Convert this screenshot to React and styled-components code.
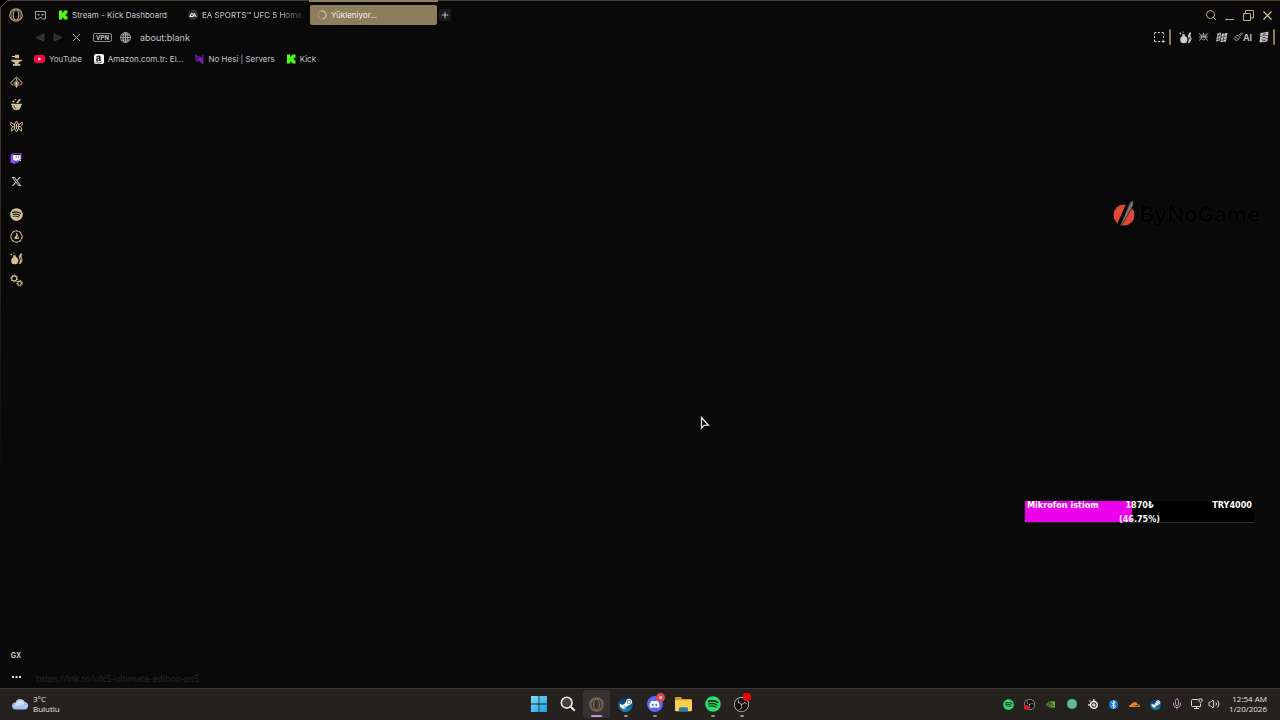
import React from "react";
import styled, { createGlobalStyle } from "styled-components";
import {
  FaSpotify,
  FaTwitch,
  FaXTwitter,
  FaDiscord,
  FaAmazon,
  FaBluetoothB,
  FaSteamSymbol,
} from "react-icons/fa6";
import { SiNvidia, SiCloudflare, SiObsstudio, SiSteelseries } from "react-icons/si";
import { X, Search, Plus, Mic, Volume2 } from "lucide-react";

const GlobalStyle = createGlobalStyle`
  * { box-sizing: border-box; }
  body {
    margin: 0;
    background: #090909;
    color: #c4c4c4;
    font-family: Inter, "Liberation Sans", sans-serif;
    font-size: 8px;
    overflow: hidden;
  }
  button, input { font: inherit; color: inherit; }
  svg { display: block; flex: none; }
`;

const Desktop = styled.div`
  display: flex;
  flex-direction: column;
  min-height: 100vh;
`;

const Browser = styled.div`
  position: relative;
  flex: 1;
  display: flex;
  flex-direction: column;
  padding-top: 3px;
  border-top: 1px solid #453e31;

  &::before {
    content: "";
    position: absolute;
    top: 8px;
    left: 0;
    width: 1px;
    height: 70%;
    background: linear-gradient(#544a38, #2a251c 50%, transparent);
  }
`;

const Corner = styled.svg`
  position: absolute;
  top: -1px;
  left: 0;
`;

const IconButton = styled.button`
  position: relative;
  display: flex;
  align-items: center;
  justify-content: center;
  width: ${(props) => props.$w || 20}px;
  height: ${(props) => props.$h || 22}px;
  padding: 0;
  border: 0;
  background: none;
  color: ${(props) => props.$color || "#b8b8b8"};
`;

const TabStrip = styled.div`
  display: flex;
  align-items: center;
  height: 22px;
  padding-left: 6px;
  padding-right: 3px;
`;

const IslandButton = styled(IconButton)`
  margin: 0 7px 0 9px;
`;

const Tabs = styled.div`
  display: flex;
  gap: 2px;
`;

const Tab = styled.button`
  position: relative;
  display: flex;
  align-items: center;
  gap: 4px;
  width: 127px;
  height: 20px;
  padding: 0 7px;
  border: 0;
  border-radius: 2px;
  background: ${(props) => (props.$active ? "#8c7d5c" : "none")};
  color: ${(props) => (props.$active ? "#f6f0e2" : "#c6c6c6")};
  text-align: left;
`;

const TabTitle = styled.span`
  flex: 1;
  white-space: nowrap;
  ${(props) => props.$fade && "mask-image: linear-gradient(90deg, #000 78%, #0003);"}
`;

const TabEdge = styled.i`
  position: absolute;
  top: -5px;
  left: -1px;
  right: -1px;
  height: 2px;
  background: #8c7d5c;
`;

const NewTab = styled(IconButton)`
  margin-left: 2px;
  border-radius: 2px;
  background: #1c1b1c;
`;

const WindowButtons = styled.div`
  display: flex;
  margin-left: auto;
`;

const AddressRow = styled.div`
  display: flex;
  align-items: center;
  height: 22px;
  padding-left: 31px;
`;

const Vpn = styled.button`
  height: 9px;
  width: 19px;
  margin: 0 8px;
  padding: 0;
  border: 1px solid #8d8d8d;
  border-radius: 2px;
  background: none;
  color: #c6c6c6;
  font-size: 6px;
  line-height: 7px;
  font-weight: 700;
`;

const AddressInput = styled.input`
  flex: 1;
  min-width: 0;
  margin-left: 9px;
  padding: 0;
  border: 0;
  outline: 0;
  background: none;
  color: #c6c6c6;
  font-size: 9px;
`;

const Divider = styled.i`
  width: 2px;
  height: 16px;
  margin-right: 5px;
  border-radius: 1px;
  background: #8c7d5c;
`;

const Ai = styled.b`
  font-size: 9px;
`;

const Body = styled.div`
  flex: 1;
  display: flex;
`;

const Sidebar = styled.nav`
  display: flex;
  flex-direction: column;
  gap: 11px;
  width: 32px;
  padding-top: 1px;
`;

const SideGroup = styled.div`
  margin-top: ${(props) => (props.$last ? "auto" : 0)};
`;

const SideButton = styled(IconButton)`
  width: 32px;
  font-size: 7px;
  font-weight: 700;
`;

const Main = styled.main`
  flex: 1;
  min-width: 0;
  display: flex;
  flex-direction: column;
`;

const Bookmarks = styled.div`
  display: flex;
  align-items: center;
  gap: 12px;
  height: 22px;
  padding-left: 2px;
`;

const Bookmark = styled.a`
  display: flex;
  align-items: center;
  gap: 4px;
  color: #c6c6c6;
  text-decoration: none;
`;

const Favicon = styled.span`
  display: flex;
  align-items: center;
  justify-content: center;
  width: 10px;
  height: 10px;
  border-radius: 2px;
  background: ${(props) => props.$bg || "none"};
  color: #111;
`;

const Page = styled.div`
  flex: 1;
  display: flex;
  align-items: flex-end;
`;

const StatusUrl = styled.span`
  padding: 0 4px 3px;
  color: #292929;
  font: 9px/12px "Open Sans", sans-serif;
`;

const Sponsor = styled.div`
  position: absolute;
  top: 197px;
  right: 20px;
  display: flex;
  align-items: center;
  gap: 3px;
  color: #000;
  font: 700 22px/32px Inter, sans-serif;
  text-shadow: 0 0 1px #2c2c2c;
`;

const Goal = styled.div`
  position: absolute;
  right: 26px;
  bottom: 165px;
  display: grid;
  grid-template-columns: 1fr 48px 1fr;
  width: 229px;
  height: 22px;
  padding: 0 2px;
  border-bottom: 1px solid #2b2b2b;
  background: linear-gradient(90deg, #ec00ec 46.75%, #000 46.75%);
  color: #fff;
  font: 700 9px/14px "DejaVu Sans Condensed", "Noto Sans", sans-serif;
  text-align: center;
`;

const GoalText = styled.span`
  margin-top: -3px;
  white-space: nowrap;
  text-align: ${(props) => props.$align || "center"};
`;

const Cursor = styled.svg`
  position: absolute;
  top: 415px;
  left: 700px;
`;

const Taskbar = styled.footer`
  display: grid;
  grid-template-columns: 1fr auto 1fr;
  align-items: center;
  height: 32px;
  padding-bottom: 1px;
  border-top: 1px solid #3b3935;
  background: #24211e;
  color: #e4e4e4;
  font: 8px/10px "Open Sans", "Noto Sans", sans-serif;
`;

const Weather = styled.button`
  display: flex;
  align-items: center;
  gap: 4px;
  padding: 0 0 0 12px;
  border: 0;
  background: none;
  text-align: left;
`;

const Apps = styled.div`
  display: flex;
  gap: 2px;
`;

const AppButton = styled.button`
  position: relative;
  display: flex;
  align-items: center;
  justify-content: center;
  width: 27px;
  height: 28px;
  padding: 0;
  border: 0;
  border-radius: 3px;
  background: ${(props) => (props.$active ? "#35322f" : "none")};

  &::after {
    content: "";
    position: absolute;
    bottom: 1px;
    width: ${(props) => (props.$active ? 11 : 4)}px;
    height: 2px;
    border-radius: 1px;
    background: ${(props) => (props.$active ? "#cf8fdb" : "#929090")};
    opacity: ${(props) => (props.$active || props.$running ? 1 : 0)};
  }
`;

const Badge = styled.i`
  position: absolute;
  top: 3px;
  right: ${(props) => (props.$ring ? 3 : 4)}px;
  width: ${(props) => (props.$ring ? 9 : 8)}px;
  height: ${(props) => (props.$ring ? 9 : 8)}px;
  border: ${(props) => (props.$ring ? "3px solid #d9494d" : 0)};
  border-radius: ${(props) => (props.$ring ? "50%" : "3px")};
  background: ${(props) => (props.$ring ? "#f3d5d5" : "#e8000b")};
`;

const RecDot = styled.i`
  position: absolute;
  left: 5px;
  bottom: 5px;
  width: 5px;
  height: 5px;
  border-radius: 50%;
  background: #e0102a;
`;

const Tray = styled.div`
  display: flex;
  align-items: center;
  justify-content: flex-end;
  padding-right: 13px;
`;

const Disc = styled.span`
  display: flex;
  align-items: center;
  justify-content: center;
  width: ${(props) => props.$size}px;
  height: ${(props) => props.$size}px;
  border-radius: ${(props) => props.$radius || "50%"};
  background: ${(props) => props.$bg};
  color: ${(props) => props.$color || "#fff"};
`;

const Clock = styled.time`
  margin-left: 8px;
  text-align: right;
  white-space: nowrap;
`;

const OperaIcon = ({ size = 14, color = "#b5a27b" }) => (
  <svg width={size} height={size} viewBox="0 0 14 14" fill="none" stroke={color}>
    <circle cx="7" cy="7" r="6.2" strokeWidth="1.2" />
    <ellipse cx="7" cy="7" rx="2.7" ry="5" strokeWidth="1.2" />
    <path d="M4.3 2.2C1.6 4.7 1.6 9.3 4.3 11.8M9.7 2.2c2.7 2.5 2.7 7.1 0 9.6" strokeWidth=".7" />
  </svg>
);

const KickIcon = () => (
  <svg width="9" height="10" viewBox="0 0 9 10" fill="#53fc18">
    <path d="M0 .5h3.2v2.200h1V1.500h1V.5h3.300v3H7.400v1H6.400v1h1v1h1.100v3H5.200v-1h-1v-1h-1v2H0z" />
  </svg>
);

const EaIcon = () => (
  <svg width="10" height="10" viewBox="0 0 20 20">
    <circle cx="10" cy="10" r="10" fill="#303030" />
    <path d="M6 6h6l-1 1.7H5zM4.2 9h6.2l-1 1.7H6.2l-.7 1.2h3.6L13 6l4.500 7.800h-2.200l-.8-1.500h-3l-.9 1.500H2.300l1.900-3.100H3.100zM13 9.100l-1 1.700h2z" fill="#f2f2f2" />
  </svg>
);

const YoutubeIcon = () => (
  <svg width="11" height="8" viewBox="0 0 11 8">
    <rect width="11" height="8" rx="2" fill="#f4033d" />
    <path d="M4.3 2.2v3.6L7.4 4z" fill="#fff" />
  </svg>
);

const NoHesiIcon = () => (
  <svg width="9" height="10" viewBox="0 0 9 10" fill="none" stroke="#8a20d6" strokeWidth="1.1">
    <path d="M1 7.2V1.400l5.200 5.800V3.300M2.800 5v2.800M4 2.200l3.800 4V9.500L3.400 5M7.800 1.300v4" />
  </svg>
);

const MaskIcon = () => (
  <svg width="11" height="9" viewBox="0 0 11 9" fill="none" stroke="#a6a6a6">
    <path d="M.5.5h10v7.500H7.300L6.200 6.500H4.800L3.700 8H.5z" />
    <path d="M2.500 3.700h2M6.500 3.700h2" strokeWidth="1.500" />
  </svg>
);

const GlobeIcon = () => (
  <svg width="11" height="11" viewBox="0 0 11 11" fill="none" stroke="#b4b4b4" strokeWidth=".9">
    <circle cx="5.5" cy="5.5" r="4.9" />
    <ellipse cx="5.5" cy="5.5" rx="2.3" ry="4.9" />
    <path d="M.6 5.5h9.8M1.400 3h8.200M1.400 8h8.200M5.500.6v9.800" />
  </svg>
);

const ArrowIcon = ({ flip }) => (
  <svg width="10" height="9" viewBox="0 0 10 9" fill="#2e2e2e" stroke="#444" strokeWidth=".7">
    <path d={flip ? "M1 .8 9 4.5 1 8.2z" : "M9 .8 1 4.5 9 8.2z"} />
  </svg>
);

const SpinnerIcon = () => (
  <svg width="10" height="10" viewBox="0 0 10 10" fill="none" strokeWidth="1.3">
    <circle cx="5" cy="5" r="4" stroke="#a2936f" />
    <path d="M4 1.1A4 4 0 0 1 6 8.9" stroke="#cdbf9e" />
  </svg>
);

const RestoreIcon = () => (
  <svg width="11" height="11" viewBox="0 0 11 11" fill="none" stroke="#c0ad84">
    <path d="M.5 3.500h7v7h-7zM2.500 3.500v-3h8v7.500h-3" />
  </svg>
);

const SnapIcon = () => (
  <svg width="11" height="11" viewBox="0 0 11 11" fill="none" stroke="#c0c0c0">
    <path d="M.5 2.500v-2h2M4 .5h2M7.500.5h2v2M9.500 4v2M.5 4v2M.5 7.500v2h2M4 9.500h2M9 7.500V11M7.500 9.500H11" />
  </svg>
);

const AnvilIcon = () => (
  <svg width="13" height="13" viewBox="0 0 13 13" fill="currentColor">
    <path d="M5 .8h4v3.400H5zM1.800 2h3.500v1H1.800zM1 5.700h11v1.200c-1.600.2-2.700.8-3.500 1.800v1.200h1.800v1.900H3v-1.900h1.700V8.600C3.200 8.300 1.600 7.500 1 5.700z" />
  </svg>
);

const WebIcon = () => (
  <svg width="13" height="13" viewBox="0 0 13 13" fill="none" stroke="currentColor">
    <path d="M3 9.200.9 7.500v-1L6.500 1l5.600 5.500v1L10 9.200" />
    <path d="M6.500 2v2.500M4.200 10V6.300l2.300-2 2.300 2V10" strokeWidth=".8" />
    <path d="M6.500 5 8 7l-.6 3.500L6.500 12l-.9-1.500L5 7z" fill="currentColor" stroke="none" />
  </svg>
);

const PotionIcon = () => (
  <svg width="13" height="13" viewBox="0 0 13 13" fill="currentColor">
    <path d="M1 5.8h11v1h-.7c0 2.600-1.800 5.400-4.800 5.400S1.700 9.400 1.700 6.800H1zM6 5 9.700.8l1.200.9L8.200 5z" />
    <circle cx="3.4" cy="3.6" r="1" />
    <circle cx="5.2" cy="1.7" r=".7" />
    <path d="M4 7.5c.2 1.500.9 2.600 2 3.300" stroke="#090909" strokeWidth=".7" fill="none" />
  </svg>
);

const BugIcon = () => (
  <svg width="13" height="13" viewBox="0 0 13 13" fill="none" stroke="currentColor">
    <path d="M.8 2.200 5 5.200M12.200 2.200 8 5.200M2.500 6.600h2M10.500 6.600h-2M1.400 11.300 4.800 8M11.600 11.300 8.200 8M.8 2.200v3l1.700 1.400-1.100 2v2.700M12.200 2.200v3l-1.700 1.400 1.100 2v2.700" />
    <path d="M6.500 1 8.500 4.600v4L6.500 12 4.500 8.600v-4z" />
    <path d="M6.500 4v5" strokeWidth="1.400" />
  </svg>
);

const PlayerIcon = () => (
  <svg width="13" height="13" viewBox="0 0 13 13" fill="none" stroke="currentColor">
    <circle cx="6.5" cy="6.5" r="5.600" strokeDasharray="3 .5" strokeWidth="1.1" />
    <path d="M6.500 3v4M6.500 3 8.800 8.600H4.500" strokeWidth=".9" />
    <circle cx="6" cy="7.500" r="1.400" fill="currentColor" stroke="none" />
  </svg>
);

const BombIcon = () => (
  <svg width="13" height="13" viewBox="0 0 13 13" fill="currentColor">
    <circle cx="4.8" cy="8.700" r="3.600" />
    <path d="M3.200 3.200h2.600v2.500H3.200zM.8 1.200l1.600 1-.5 1.200-1.500-.6zM3.500.4h.9v1.400h-.9z" />
    <path d="M9.200 3.700 11 1l1 .7-.6 2.600 1.200 3.500-1.500 3.600-2.300.8c1.300-2.200 1.400-4.400.2-6.500z" />
    <path d="M10.800 5.500v3" stroke="#090909" strokeWidth=".8" />
  </svg>
);

const gear = (x, y, r) => (
  <g>
    <circle cx={x} cy={y} r={r} strokeWidth="1.1" />
    <circle cx={x} cy={y} r={r + 1} strokeWidth="1" strokeDasharray="1.3 1.35" />
  </g>
);

const GearsIcon = () => (
  <svg width="13" height="13" viewBox="0 0 13 13" fill="none" stroke="currentColor">
    {gear(4.2, 4.4, 2.5)}
    {gear(9.6, 9.3, 1.9)}
  </svg>
);

const MaskedFaceIcon = () => (
  <svg width="11" height="10" viewBox="0 0 11 10" fill="none" stroke="#999">
    <path d="M.8 1.300 3 3h5l2.200-1.700M1 5h9M3.200 3v3.500L5.500 8l2.300-1.500V3M1 8.600l2.200-2M10 8.600l-2.200-2M5.500.7v2" />
    <path d="M4 4.600h3" strokeWidth="1.8" />
  </svg>
);

const FlagsIcon = () => (
  <svg width="13" height="11" viewBox="0 0 13 11" fill="#cfcfcf">
    <path d="M2.500 1.200 6.300.5 5 8.500 1 9.500zM7 1.800 12.500 1 11 9.500l-5.500.8z" />
    <path d="M.8 4.600 6 3M6 5.500l6.200-1.700M1 7.500l4-1M5.500 8.500l6-1.700M9.500 1 8 10M4.500 1 3 9" stroke="#111" strokeWidth=".6" fill="none" />
  </svg>
);

const PenIcon = () => (
  <svg width="10" height="10" viewBox="0 0 10 10" fill="none" stroke="#9c9c9c">
    <path d="M1 6.500 4.500 3 7 5.500 3.500 9zM5.800 3.500 8.500.8l.9.9-2.500 2.600M2.500 5 5 7.500" />
  </svg>
);

const ServerIcon = () => (
  <svg width="10" height="12" viewBox="0 0 10 12" fill="#c9c9c9">
    <path d="M1.500 2 9.500.8 9.100 4l-8 1zM1.200 5.400 9.100 4.500l-.4 3-7.900.7zM.6 8.500l8.100-.5-.5 2.500-7.500 1z" />
    <path d="M3.500 3.300 7 2.700M3.300 6.700l3.400-.4M3.300 9.700l3.300-.3" stroke="#151515" strokeWidth=".7" />
  </svg>
);

const CloudIcon = () => (
  <svg width="17" height="12" viewBox="0 0 17 12">
    <path d="M3.700 11.500a3.500 3.500 0 0 1-.2-7A5 5 0 0 1 12.800 4a3.800 3.800 0 0 1 .3 7.500z" fill="#a9c2f1" />
    <path d="M3.500 8.500A5 5 0 0 1 8 2.500c3 0 4 1.500 4.500 3.500" fill="#d3e1fb" />
  </svg>
);

const WindowsIcon = () => (
  <svg width="16" height="16" viewBox="0 0 16 16">
    <defs>
      <linearGradient id="win" x2="1" y2="1">
        <stop stopColor="#83dcfa" />
        <stop offset="1" stopColor="#169fe5" />
      </linearGradient>
    </defs>
    <path fill="url(#win)" d="M0 0h7.600v7.600H0zM8.400 0H16v7.600H8.400zM0 8.400h7.600V16H0zM8.400 8.400H16V16H8.400z" />
  </svg>
);

const FolderIcon = () => (
  <svg width="17" height="15" viewBox="0 0 17 15">
    <path d="M0 1.200Q0 0 1.200 0h4.600l1.600 2H16q1 0 1 1v10.500H0z" fill="#d79b24" />
    <path d="M0 3.200h17v10q0 1-1 1H1q-1 0-1-1z" fill="#fbd052" />
    <path d="M4 14.200v-2.700q0-1.200 1.200-1.200h6.600q1.200 0 1.200 1.200v2.700z" fill="#267fb0" />
  </svg>
);

const NetworkIcon = () => (
  <svg width="12" height="12" viewBox="0 0 12 12" fill="none" stroke="#d6d6d6">
    <path d="M7 1.500H1.500q-1 0-1 1v5q0 1 1 1H9.500V5.500M3 10.500h5M5.500 8.500v2M8 1h3v2.300L9.500 4.800 8 3.300z" />
  </svg>
);

const SponsorMark = () => (
  <svg width="23" height="30" viewBox="0 0 23 30">
    <circle cx="11" cy="16" r="10.5" fill="#df4834" />
    <path d="M3 27.500 13.500 4h3L8 28z" fill="#090909" />
    <path d="M6 29 17 3.500l3-2.500.3 5L9.500 25z" fill="#757575" stroke="#090909" strokeWidth=".6" />
  </svg>
);

const sideTools = [
  ["GX Control", AnvilIcon],
  ["GX Corner", WebIcon],
  ["Mods", PotionIcon],
  ["GX Cleaner", BugIcon],
];
const sideExtras = [
  ["Player", PlayerIcon],
  ["Hot Tabs Killer", BombIcon],
  ["Settings", GearsIcon],
];

const Window = () => (
  <Browser>
    <Corner width="10" height="10" viewBox="0 0 10 10">
      <path d="M0 0h8L0 8z" fill="#000" />
      <path d="M.5 9V7.500L7.500.5H10" fill="none" stroke="#625740" />
    </Corner>
    <TabStrip>
      <IconButton aria-label="Opera menu"><OperaIcon /></IconButton>
      <IslandButton $w={10} aria-label="Workspace"><MaskIcon /></IslandButton>
      <Tabs role="tablist">
        <Tab role="tab">
          <KickIcon />
          <TabTitle>Stream - Kick Dashboard</TabTitle>
        </Tab>
        <Tab role="tab">
          <EaIcon />
          <TabTitle $fade>EA SPORTS™ UFC 5 Home</TabTitle>
        </Tab>
        <Tab role="tab" $active aria-selected="true">
          <TabEdge />
          <SpinnerIcon />
          <TabTitle>Yükleniyor...</TabTitle>
        </Tab>
      </Tabs>
      <NewTab $w={12} $h={12} $color="#dddddd" aria-label="New tab"><Plus size={10} /></NewTab>
      <WindowButtons>
        <IconButton $w={19} $color="#c0ad84" aria-label="Search tabs"><Search size={12} /></IconButton>
        <IconButton $w={19} aria-label="Minimize">
          <svg width="9" height="11" viewBox="0 0 9 11"><path d="M0 9.5h9" stroke="#c0ad84" /></svg>
        </IconButton>
        <IconButton $w={19} aria-label="Restore"><RestoreIcon /></IconButton>
        <IconButton $w={19} $color="#d8c9a5" aria-label="Close"><X size={15} strokeWidth={1.8} /></IconButton>
      </WindowButtons>
    </TabStrip>
    <AddressRow>
      <IconButton $w={18} aria-label="Back"><ArrowIcon /></IconButton>
      <IconButton $w={18} aria-label="Forward"><ArrowIcon flip /></IconButton>
      <IconButton $w={18} aria-label="Stop"><X size={13} strokeWidth={1.8} /></IconButton>
      <Vpn>VPN</Vpn>
      <GlobeIcon />
      <AddressInput aria-label="Address" defaultValue="about:blank" />
      <IconButton aria-label="Snapshot"><SnapIcon /></IconButton>
      <Divider />
      <IconButton $w={18} $color="#cccccc" aria-label="Bomb extension"><BombIcon /></IconButton>
      <IconButton $w={18} aria-label="Mask extension"><MaskedFaceIcon /></IconButton>
      <IconButton $w={18} aria-label="Flags extension"><FlagsIcon /></IconButton>
      <IconButton $w={25} aria-label="AI prompts"><PenIcon /><Ai>AI</Ai></IconButton>
      <IconButton $w={18} aria-label="Server extension"><ServerIcon /></IconButton>
      <Divider />
    </AddressRow>
    <Body>
      <Sidebar>
        <SideGroup>
          {sideTools.map(([label, Icon]) => (
            <SideButton key={label} $color="#d2bf93" aria-label={label}><Icon /></SideButton>
          ))}
        </SideGroup>
        <SideGroup>
          <SideButton aria-label="Twitch">
            <Disc $size={10} $radius="2px" $bg="linear-gradient(transparent 10%, #fff 10% 70%, transparent 70%)" $color="#8c52f5">
              <FaTwitch size={12} />
            </Disc>
          </SideButton>
          <SideButton $color="#c6c6c6" aria-label="X"><FaXTwitter size={11} /></SideButton>
        </SideGroup>
        <SideGroup>
          <SideButton $color="#d2bf93" aria-label="Spotify"><FaSpotify size={13} /></SideButton>
          {sideExtras.map(([label, Icon]) => (
            <SideButton key={label} $color="#d2bf93" aria-label={label}><Icon /></SideButton>
          ))}
        </SideGroup>
        <SideGroup $last>
          <SideButton $color="#d3c8a9">GX</SideButton>
          <SideButton $color="#dddddd" aria-label="More">
            <svg width="9" height="2" viewBox="0 0 9 2" fill="currentColor">
              <path d="M0 0h2v2H0zM3.500 0h2v2h-2zM7 0h2v2H7z" />
            </svg>
          </SideButton>
        </SideGroup>
      </Sidebar>
      <Main>
        <Bookmarks>
          <Bookmark href="#youtube"><YoutubeIcon />YouTube</Bookmark>
          <Bookmark href="#amazon">
            <Favicon $bg="#fff"><FaAmazon size={9} /></Favicon>Amazon.com.tr: El...
          </Bookmark>
          <Bookmark href="#nohesi"><NoHesiIcon />No Hesi | Servers</Bookmark>
          <Bookmark href="#kick"><KickIcon />Kick</Bookmark>
        </Bookmarks>
        <Page>
          <StatusUrl>https://lnk.to/ufc5-ultimate-edition-ps5</StatusUrl>
        </Page>
      </Main>
    </Body>
    <Sponsor><SponsorMark />ByNoGame</Sponsor>
    <Goal role="progressbar" aria-valuenow={1870} aria-valuemax={4000} aria-label="Mikrofon istiom">
      <GoalText $align="left">Mikrofon istiom</GoalText>
      <GoalText>1870₺<br />(46.75%)</GoalText>
      <GoalText $align="right">TRY4000</GoalText>
    </Goal>
    <Cursor width="10" height="14" viewBox="0 0 10 14">
      <path d="M1.500 1.500v10.700l2.600-2.800 4.400-.2z" fill="#090909" stroke="#e5e5e5" strokeWidth="1.3" />
    </Cursor>
  </Browser>
);

const App = () => (
  <Desktop>
    <GlobalStyle />
    <Window />
    <Taskbar>
      <Weather>
        <CloudIcon />
        <span>3°C<br />Bulutlu</span>
      </Weather>
      <Apps>
        <AppButton aria-label="Start"><WindowsIcon /></AppButton>
        <AppButton aria-label="Search">
          <svg width="16" height="16" viewBox="0 0 16 16" fill="#44423f" stroke="#e9e9e9">
            <circle cx="6.7" cy="6.7" r="5.4" strokeWidth="1.6" />
            <path d="m10.800 10.800 4 4" strokeWidth="2" />
          </svg>
        </AppButton>
        <AppButton $active aria-label="Opera GX"><OperaIcon size={15} color="#7c7053" /></AppButton>
        <AppButton $running aria-label="Steam">
          <Disc $size={15} $bg="linear-gradient(#122a4f, #1786b5)"><FaSteamSymbol size={14} /></Disc>
        </AppButton>
        <AppButton $running aria-label="Discord">
          <Disc $size={16} $bg="#5865f2"><FaDiscord size={11} /></Disc>
          <Badge $ring />
        </AppButton>
        <AppButton aria-label="Files"><FolderIcon /></AppButton>
        <AppButton $running aria-label="Spotify">
          <Disc $size={15} $bg="#111" $color="#2adf68"><FaSpotify size={16} /></Disc>
        </AppButton>
        <AppButton $running aria-label="OBS Studio">
          <Disc $size={15} $bg="#111" $color="#cfcfcf"><SiObsstudio size={15} /></Disc>
          <Badge />
        </AppButton>
      </Apps>
      <Tray>
        <IconButton $w={21} $color="#2adf68" aria-label="Spotify tray"><FaSpotify size={11} /></IconButton>
        <IconButton $w={21} aria-label="OBS tray">
          <Disc $size={11} $bg="#111" $color="#d4d4d4"><SiObsstudio size={11} /></Disc>
          <RecDot />
        </IconButton>
        <IconButton $w={21} $color="#6fae2f" aria-label="NVIDIA"><SiNvidia size={9} /></IconButton>
        <IconButton $w={21} aria-label="Status"><Disc $size={10} $bg="#58c08a" /></IconButton>
        <IconButton $w={21} $color="#ececec" aria-label="SteelSeries"><SiSteelseries size={10} /></IconButton>
        <IconButton $w={21} aria-label="Bluetooth">
          <Disc $size={9} $radius="4px" $bg="#0f78d4"><FaBluetoothB size={9} /></Disc>
        </IconButton>
        <IconButton $w={21} $color="#e98231" aria-label="Cloudflare"><SiCloudflare size={11} /></IconButton>
        <IconButton $w={21} aria-label="Steam tray">
          <Disc $size={11} $bg="linear-gradient(#122a4f, #1786b5)"><FaSteamSymbol size={10} /></Disc>
        </IconButton>
        <IconButton $w={21} $color="#b994bb" aria-label="Microphone"><Mic size={12} /></IconButton>
        <IconButton aria-label="Network"><NetworkIcon /></IconButton>
        <IconButton $w={14} $color="#d6d6d6" aria-label="Volume"><Volume2 size={12} /></IconButton>
        <Clock>12:54 AM<br />1/20/2026</Clock>
      </Tray>
    </Taskbar>
  </Desktop>
);

export default App;
